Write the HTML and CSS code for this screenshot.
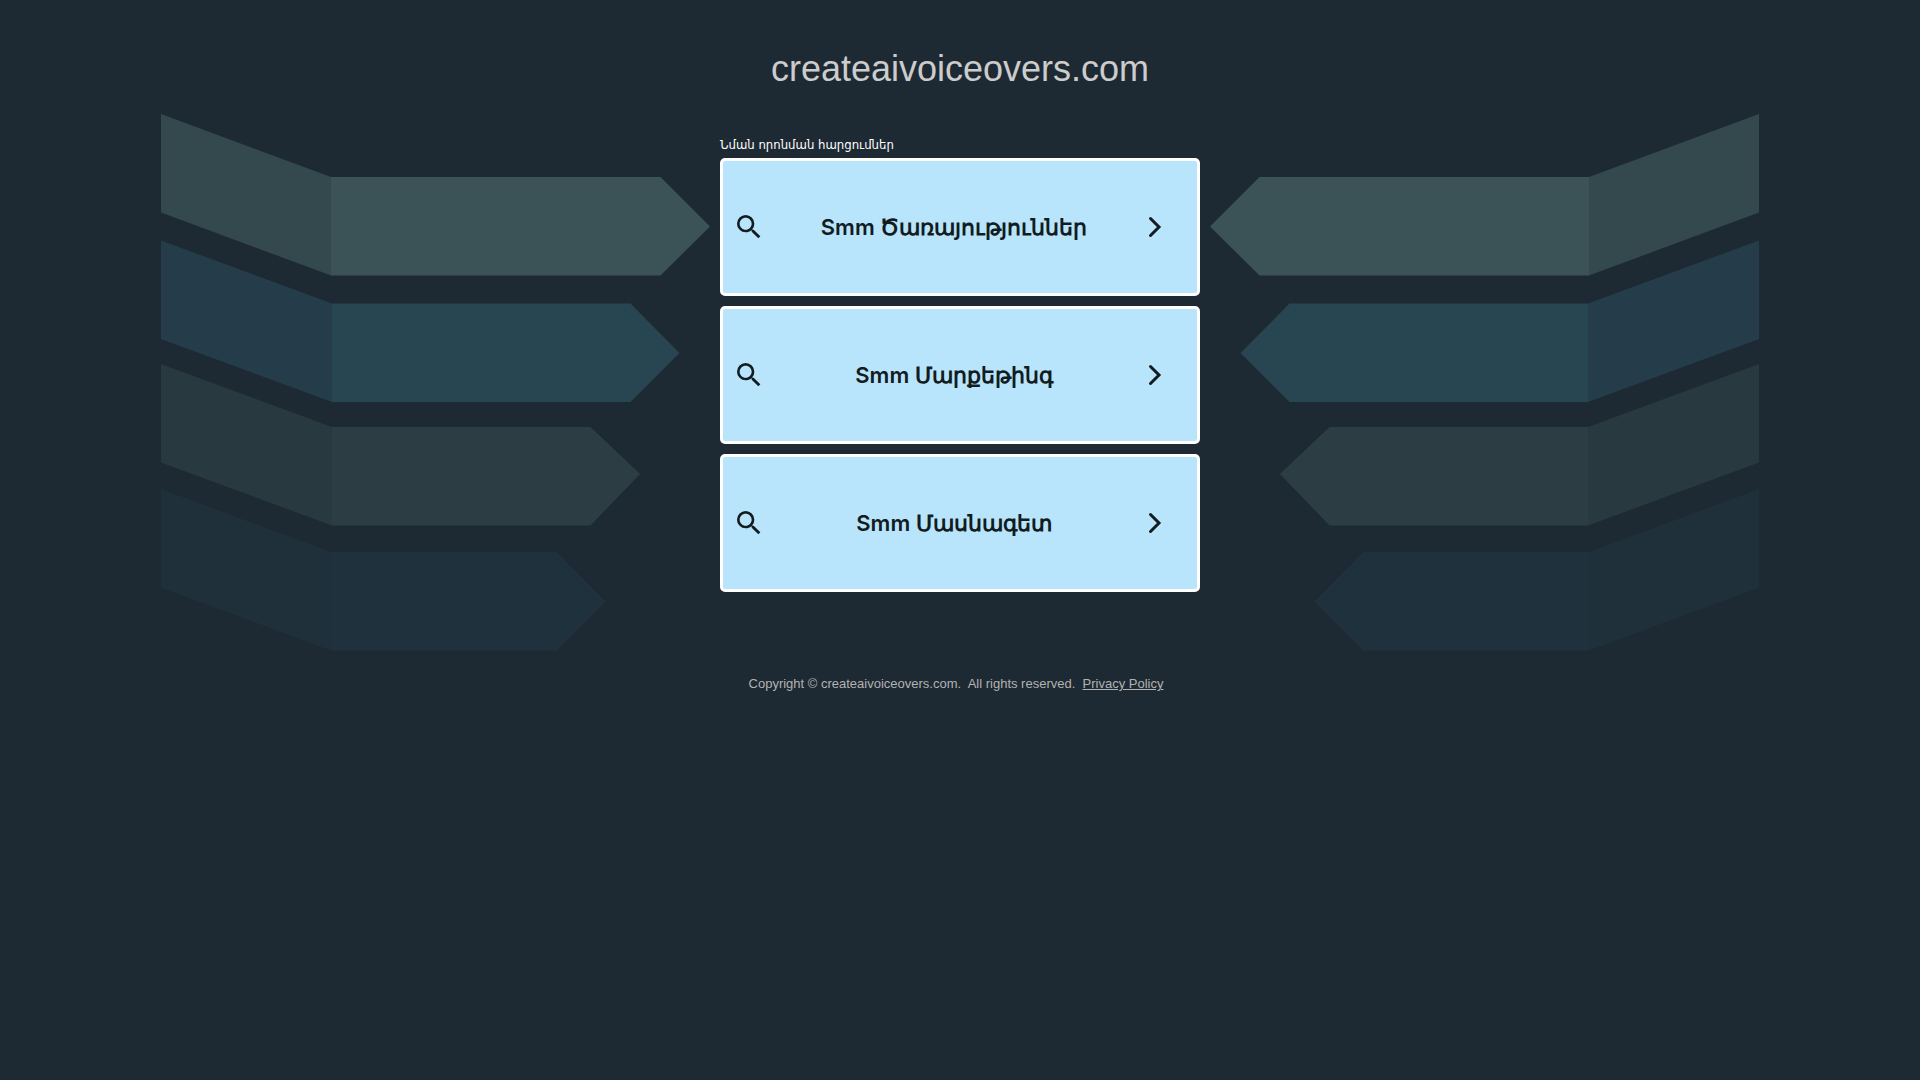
FILE: index.html
```
<!DOCTYPE html>
<html lang="hy">
<head>
  <meta charset="utf-8">
  <meta name="viewport" content="width=device-width, initial-scale=1">
  <title>createaivoiceovers.com</title>
  <link rel="stylesheet" href="styles.css">
</head>
<body>
  <!-- shared shapes -->
  <svg class="symbols" aria-hidden="true">
    <symbol id="arrows" viewBox="0 0 549 537">
      <path fill="#34494d" d="M0 0l170 63v98.500L0 98.500z"/>
      <path fill="#3b5356" d="M170 63h329.500L549 112.500l-49.500 49H170z"/>
      <path fill="#253d4b" d="M0 126.500l171 63V288L0 225z"/>
      <path fill="#284552" d="M171 189.500h298.500L518.500 239l-49 49H171z"/>
      <path fill="#28393f" d="M0 250l171 63v98.500L0 348.500z"/>
      <path fill="#2c3e44" d="M171 313h258.500L479 360l-49.500 51.500H171z"/>
      <path fill="#1f303a" d="M0 375l170 63v98.500L0 473.500z"/>
      <path fill="#20313e" d="M170 438h225.500L444.500 487.500l-49 49H170z"/>
    </symbol>
    <symbol id="search" viewBox="0 0 24 24">
      <path d="M15.500 14h-.79l-.28-.27A6.471 6.471 0 0 0 16 9.500 6.500 6.500 0 1 0 9.500 16c1.610 0 3.090-.59 4.230-1.570l.27.28v.79l5 4.990L20.490 19l-4.990-5zm-6 0C7.010 14 5 11.990 5 9.500S7.010 5 9.500 5 14 7.010 14 9.500 11.990 14 9.500 14z"/>
    </symbol>
    <symbol id="chevron" viewBox="0 0 24 24">
      <path d="M7.500 3.500L16 12l-8.500 8.500" fill="none" stroke="currentColor" stroke-width="3" stroke-linecap="round"/>
    </symbol>
  </svg>

  <header class="header">
    <h1>createaivoiceovers.com</h1>
  </header>

  <main class="content">
    <svg class="arrows" viewBox="0 0 549 537" aria-hidden="true"><use href="#arrows"/></svg>

    <div class="searches">
      <p class="label">Նման որոնման հարցումներ</p>
      <nav class="links">
        <a class="link" href="#">
          <svg class="icon-search" aria-hidden="true"><use href="#search"/></svg>
          <span>Smm Ծառայություններ</span>
          <svg class="icon-chevron" aria-hidden="true"><use href="#chevron"/></svg>
        </a>
        <a class="link" href="#">
          <svg class="icon-search" aria-hidden="true"><use href="#search"/></svg>
          <span>Smm Մարքեթինգ</span>
          <svg class="icon-chevron" aria-hidden="true"><use href="#chevron"/></svg>
        </a>
        <a class="link" href="#">
          <svg class="icon-search" aria-hidden="true"><use href="#search"/></svg>
          <span>Smm Մասնագետ</span>
          <svg class="icon-chevron" aria-hidden="true"><use href="#chevron"/></svg>
        </a>
      </nav>
    </div>

    <svg class="arrows arrows-right" viewBox="0 0 549 537" aria-hidden="true"><use href="#arrows"/></svg>
  </main>

  <footer class="footer">
    Copyright © createaivoiceovers.com.&nbsp; All rights reserved.&nbsp;
    <a href="#">Privacy Policy</a>
  </footer>
</body>
</html>
```

FILE: styles.css
```
* {
  box-sizing: border-box;
}

body {
  margin: 0;
  background-color: #1e2a33;
  color: #ccc;
  font-family: "Liberation Sans", Arial, sans-serif;
}

.symbols {
  display: none;
}

.header {
  padding: 48px 20px 24px;
  text-align: center;
}

.header h1 {
  margin: 0;
  font-size: 36px;
  font-weight: normal;
  line-height: 42px;
}

.content {
  display: flex;
  justify-content: center;
  align-items: flex-start;
  gap: 10px;
}

.arrows {
  flex: 0 1 549px;
  min-width: 0;
}

.arrows-right {
  transform: scaleX(-1);
}

.searches {
  flex: 0 0 480px;
  max-width: 100%;
  padding-top: 22px;
}

.label {
  margin: 0 0 4px;
  color: #fff;
  font-family: "DejaVu Sans Condensed", "DejaVu Sans", sans-serif;
  font-size: 13px;
  line-height: 18px;
}

.links {
  display: flex;
  flex-direction: column;
  gap: 10px;
}

.link {
  display: flex;
  align-items: center;
  min-height: 138px;
  padding: 10px 30px 10px 10px;
  border: 3px solid #fff;
  border-radius: 5px;
  background-color: #b8e5fc;
  color: #121c21;
  font-family: Inter, "Liberation Sans", sans-serif;
  font-size: 22px;
  font-weight: 600;
  line-height: 30px;
  text-decoration: none;
}

.link:hover {
  background-color: #d3f0ff;
}

.link span {
  flex: 1;
  text-align: center;
}

.icon-search {
  width: 32px;
  height: 32px;
  fill: currentColor;
}

.icon-chevron {
  width: 24px;
  height: 24px;
}

.footer {
  padding: 24px 20px;
  color: #b2b2b2;
  font-size: 13px;
  line-height: 18px;
  text-align: center;
}

.footer a {
  margin-right: 8px;
  color: inherit;
}
```
